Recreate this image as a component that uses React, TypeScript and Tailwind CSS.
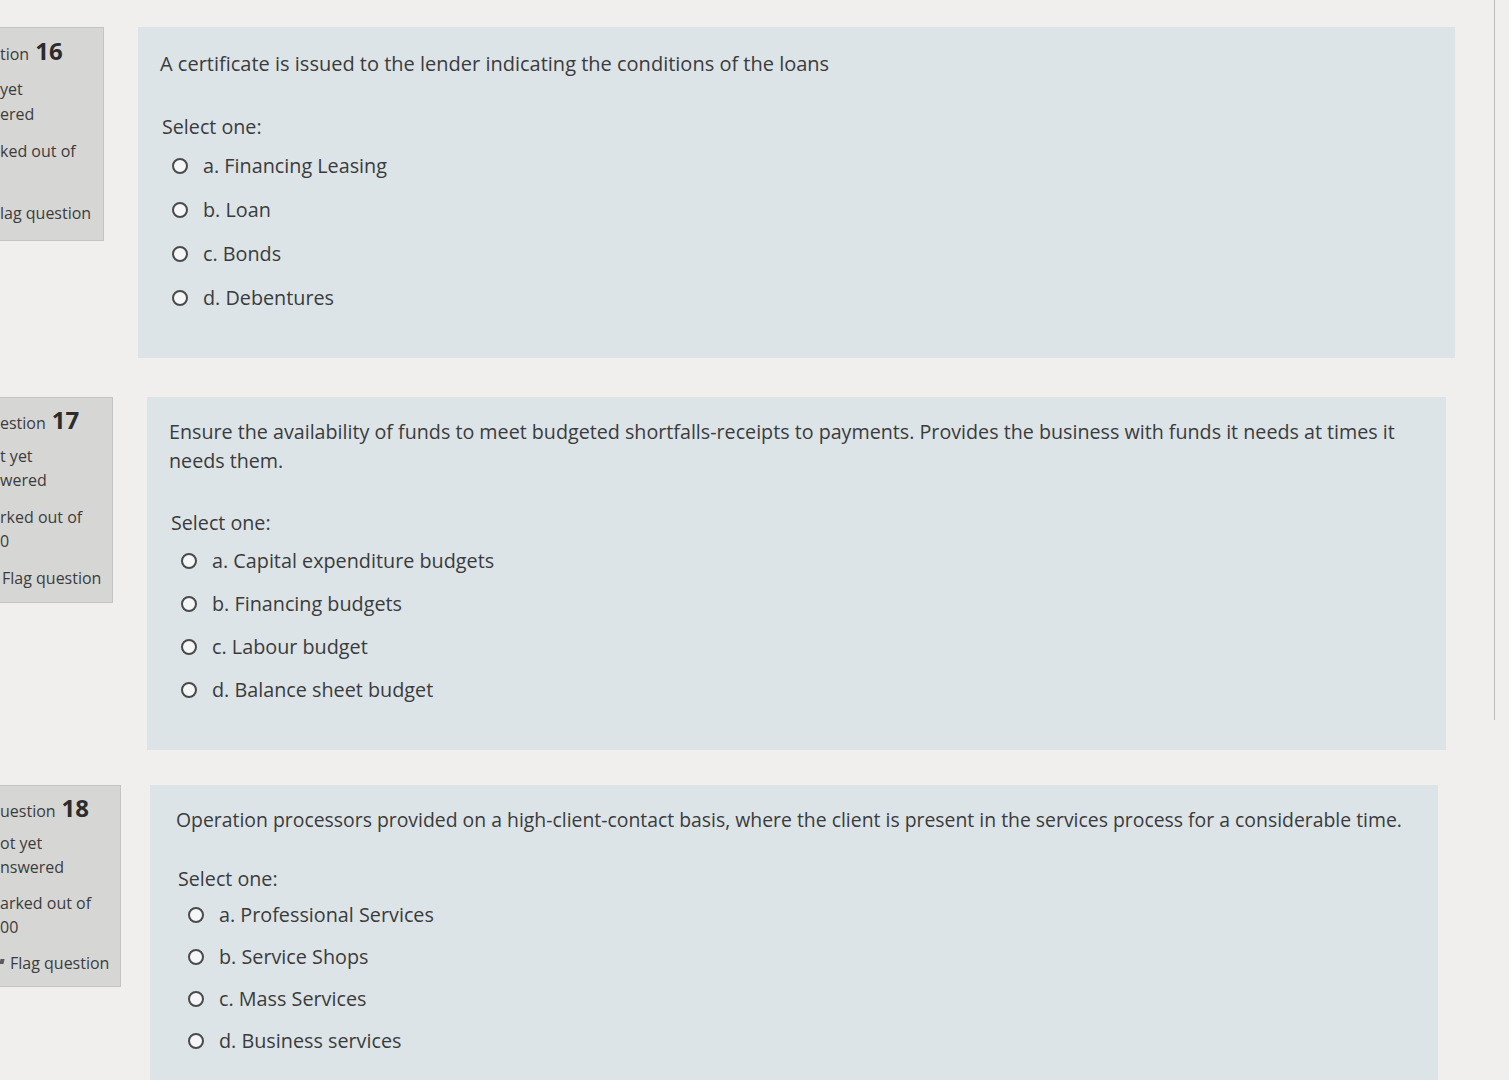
import React from 'react'

type SideLine = { text: string; bold?: string; gap?: boolean; pad?: string; tick?: boolean }

type Q = {
  side: SideLine[]
  question: string
  options: string[]
}

const QUESTIONS: Q[] = [
  {
    side: [
      { text: 'tion', bold: '16' },
      { text: 'yet' },
      { text: 'ered' },
      { text: 'ked out of', gap: true },
      { text: '\u00a0' },
      { text: 'lag question', gap: true },
    ],
    question: 'A certificate is issued to the lender indicating the conditions of the loans',
    options: ['a. Financing Leasing', 'b. Loan', 'c. Bonds', 'd. Debentures'],
  },
  {
    side: [
      { text: 'estion', bold: '17' },
      { text: 't yet' },
      { text: 'wered' },
      { text: 'rked out of', gap: true },
      { text: '0' },
      { text: 'Flag question', gap: true, pad: 'pl-[2px]' },
    ],
    question:
      'Ensure the availability of funds to meet budgeted shortfalls-receipts to payments. Provides the business with funds it needs at times it needs them.',
    options: [
      'a. Capital expenditure budgets',
      'b. Financing budgets',
      'c. Labour budget',
      'd. Balance sheet budget',
    ],
  },
  {
    side: [
      { text: 'uestion', bold: '18' },
      { text: 'ot yet' },
      { text: 'nswered' },
      { text: 'arked out of', gap: true },
      { text: '00' },
      { text: 'Flag question', gap: true, pad: 'pl-[10px]', tick: true },
    ],
    question:
      'Operation processors provided on a high-client-contact basis, where the client is present in the services process for a considerable time.',
    options: [
      'a. Professional Services',
      'b. Service Shops',
      'c. Mass Services',
      'd. Business services',
    ],
  },
]

// per-question box geometry, the photo is slightly skewed
const SIDE = [
  'w-[104px] h-[214px] leading-[25px]',
  'w-[113px] h-[206px] leading-[24.5px]',
  'w-[121px] h-[202px] leading-[24px]',
]
const SIDE_FIRST = ['mt-[10px]', 'mt-[8px]', 'mt-[8px]']
const CONTENT = [
  'ml-[34px] w-[1317px] h-[331px] pl-[22px] pt-[22px] pr-[36px]',
  'ml-[34px] w-[1299px] h-[353px] pl-[22px] pt-[20px] pr-[36px]',
  'ml-[29px] w-[1288px] h-[300px] pl-[26px] pt-[20px] pr-[8px]',
]
const QTEXT = ['text-[20px]', 'text-[19.7px]', 'text-[19.4px]']
const ROW = ['', 'mt-[39px]', 'mt-[35px]']
const SELECT_MT = ['mt-[34px]', 'mt-[33px]', 'mt-[30px]']
const OPT_MT = ['mt-[10px]', 'mt-[9px]', 'mt-[7px]']
const OPT_GAP = ['gap-[15px]', 'gap-[14px]', 'gap-[13px]']

function Radio() {
  return (
    <span className="inline-block h-[16px] w-[16px] rounded-full border-2 border-[#4a4a4a] bg-[#f4f6f7] flex-shrink-0" />
  )
}

function SideInfo({ q, i }: { q: Q; i: number }) {
  return (
    <div
      className={`${SIDE[i]} bg-[#d6d6d5] border border-l-0 border-[#c4c4c4] text-[#3c3c3c] text-[16px] pt-[10px] whitespace-nowrap overflow-hidden flex-shrink-0`}
    >
      {q.side.map((s, k) => (
        <div
          key={k}
          className={`${s.gap ? 'mt-[12px]' : ''} ${k === 1 ? SIDE_FIRST[i] : ''} ${s.pad ?? ''} relative`}
        >
          {s.tick && <span className="absolute left-0 top-[8px] h-[5px] w-[4px] bg-[#5a5a5a] -skew-x-12" />}
          {s.text}
          {s.bold && <span className="ml-[6px] text-[24px] font-bold text-[#2c2c2c]">{s.bold}</span>}
        </div>
      ))}
    </div>
  )
}

export default function App() {
  return (
    <div
      className="min-h-[1080px] w-[1509px] bg-[#f1efed] pt-[27px] overflow-hidden relative"
      style={{ fontFamily: '"Open Sans", "Noto Sans", sans-serif' }}
    >
      <div className="absolute right-[14px] top-0 h-[720px] w-px bg-[#bdbdbd]" />
      {QUESTIONS.map((q, i) => (
        <div key={i} className={`flex items-start ${ROW[i]}`}>
          <SideInfo q={q} i={i} />
          <div className={`${CONTENT[i]} bg-[#dce4e8] text-[#3b3b3b] flex-shrink-0`}>
            <p className={`${QTEXT[i]} leading-[29px]`}>{q.question}</p>
            <p className={`${SELECT_MT[i]} text-[19.7px] leading-[29px] pl-[2px]`}>Select one:</p>
            <div className={`${OPT_MT[i]} ${OPT_GAP[i]} pl-[12px] flex flex-col`}>
              {q.options.map((o) => (
                <label key={o} className="flex items-center gap-[15px] text-[19.8px] leading-[29px]">
                  <Radio />
                  <span>{o}</span>
                </label>
              ))}
            </div>
          </div>
        </div>
      ))}
    </div>
  )
}
